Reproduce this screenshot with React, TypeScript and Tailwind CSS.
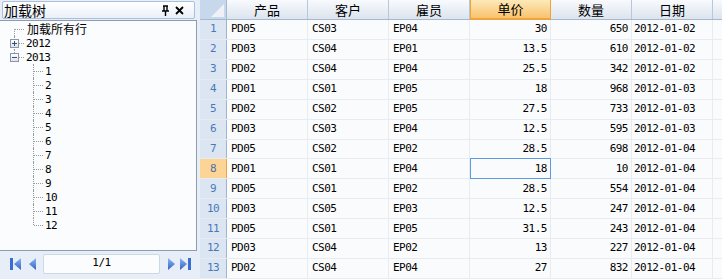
import React from 'react';

const rows = [
  ['PD05', 'CS03', 'EP04', '30', '650', '2012-01-02'],
  ['PD03', 'CS04', 'EP01', '13.5', '610', '2012-01-02'],
  ['PD02', 'CS04', 'EP04', '25.5', '342', '2012-01-02'],
  ['PD01', 'CS01', 'EP05', '18', '968', '2012-01-03'],
  ['PD02', 'CS02', 'EP05', '27.5', '733', '2012-01-03'],
  ['PD03', 'CS03', 'EP04', '12.5', '595', '2012-01-03'],
  ['PD05', 'CS02', 'EP02', '28.5', '698', '2012-01-04'],
  ['PD01', 'CS01', 'EP04', '18', '10', '2012-01-04'],
  ['PD05', 'CS01', 'EP02', '28.5', '554', '2012-01-04'],
  ['PD03', 'CS05', 'EP03', '12.5', '247', '2012-01-04'],
  ['PD05', 'CS01', 'EP05', '31.5', '243', '2012-01-04'],
  ['PD03', 'CS04', 'EP02', '13', '227', '2012-01-04'],
  ['PD02', 'CS04', 'EP04', '27', '832', '2012-01-04'],
];

const cols = ['产品', '客户', '雇员', '单价', '数量', '日期'];

const mono = { fontFamily: '"DejaVu Sans Mono", "Noto Sans CJK SC", monospace' };
const cjk = { fontFamily: '"Noto Sans CJK SC", "Liberation Sans", sans-serif' };

const Dot = ({ className }: { className: string }) => (
  <span className={'absolute border-[#9a9a9a] border-dotted ' + className} />
);

const ExpandBox = ({ open }: { open: boolean }) => (
  <span className="absolute left-[10px] top-[3px] w-[9px] h-[9px] border border-[#8c96a4] bg-gradient-to-b from-white to-[#dfe3e8] flex items-center justify-center">
    <span className="absolute w-[5px] h-px bg-[#2d4f8a]" />
    {!open && <span className="absolute w-px h-[5px] bg-[#2d4f8a]" />}
  </span>
);

const Tree = () => {
  const kids = Array.from({ length: 12 }, (_, i) => String(i + 1));
  return (
    <div className="flex flex-col pt-px text-black">
      <div className="relative h-[14px] flex items-center">
        <Dot className="left-[14px] top-[7px] h-[7px] border-l" />
        <Dot className="left-[15px] top-[7px] w-[9px] border-t" />
        <span className="ml-[27px] text-[12px] leading-none" style={cjk}>加载所有行</span>
      </div>
      <div className="relative h-[14px] flex items-center">
        <Dot className="left-[14px] top-0 h-[14px] border-l" />
        <ExpandBox open={false} />
        <Dot className="left-[19px] top-[7px] w-[5px] border-t" />
        <span className="ml-[26px] text-[11px] tracking-[-0.5px] leading-none" style={mono}>2012</span>
      </div>
      <div className="relative h-[14px] flex items-center">
        <Dot className="left-[14px] top-0 h-[7px] border-l" />
        <ExpandBox open={true} />
        <Dot className="left-[19px] top-[7px] w-[5px] border-t" />
        <span className="ml-[26px] text-[11px] tracking-[-0.5px] leading-none" style={mono}>2013</span>
      </div>
      {kids.map((k, i) => (
        <div key={k} className="relative h-[14px] flex items-center">
          <Dot className={'left-[33px] top-0 border-l ' + (i === kids.length - 1 ? 'h-[7px]' : 'h-[14px]')} />
          <Dot className="left-[34px] top-[7px] w-[9px] border-t" />
          <span className="ml-[45px] text-[11px] tracking-[-0.5px] leading-none" style={mono}>{k}</span>
        </div>
      ))}
    </div>
  );
};

const Tri = ({ dir }: { dir: 'l' | 'r' }) => (
  <svg width="7" height="12" viewBox="0 0 7 12">
    <defs>
      <linearGradient id={'g' + dir} x1="0" y1="0" x2="0" y2="1">
        <stop offset="0" stopColor="#8fb6f0" />
        <stop offset="1" stopColor="#2f64c8" />
      </linearGradient>
    </defs>
    <polygon points={dir === 'l' ? '7,0 0,6 7,12' : '0,0 7,6 0,12'} fill={'url(#g' + dir + ')'} />
  </svg>
);

const Bar = () => (
  <svg width="3" height="12" viewBox="0 0 3 12">
    <rect x="0" y="0" width="3" height="12" fill="#3a6fd0" />
  </svg>
);

const Pager = () => (
  <div className="h-[29px] flex items-center -mt-[2px]">
    <div className="ml-[10px] flex items-center gap-px">
      <Bar />
      <Tri dir="l" />
    </div>
    <div className="ml-[8px]">
      <Tri dir="l" />
    </div>
    <div className="ml-[7px] w-[117px] h-[20px] bg-[#fbfcfd] border border-[#cdd8e6] rounded-[2px] flex items-center justify-center text-[11px] tracking-[-0.5px]" style={mono}>
      1/1
    </div>
    <div className="ml-[8px]">
      <Tri dir="r" />
    </div>
    <div className="ml-[5px] flex items-center gap-px">
      <Tri dir="r" />
      <Bar />
    </div>
  </div>
);

const LeftPanel = () => (
  <div className="w-[197px] h-[279px] flex flex-col bg-[#e7eef8]">
    <div className="mx-[2px] mt-px h-[18px] border border-[#a9bfdd] rounded-[2px] bg-gradient-to-b from-white to-[#eaf0f9] flex items-center justify-between">
      <span className="ml-px text-[14px] leading-none text-black" style={cjk}>加载树</span>
      <div className="flex items-center gap-[5px] mr-[10px]">
        <svg width="9" height="11" viewBox="0 0 9 11">
          <path d="M2 1h5M3 1v5M6 1v5M1 6h7M4.5 6v5" stroke="#000" strokeWidth="1.4" fill="none" />
        </svg>
        <svg width="9" height="9" viewBox="0 0 9 9">
          <path d="M1 1l7 7M8 1l-7 7" stroke="#000" strokeWidth="1.8" />
        </svg>
      </div>
    </div>
    <div className="mt-px h-[231px] shrink-0 border border-[#8e9cb0] border-l-0 bg-[#fafcfd]">
      <Tree />
    </div>
    <Pager />
  </div>
);

const Grid = () => (
  <div className="flex-1 flex flex-col bg-[#fafbfc] overflow-hidden text-black">
    <div className="flex h-[20px] bg-gradient-to-b from-[#f8fafd] to-[#dce4ee] border-b border-[#a5b8cf]">
      <div className="relative w-[27px] shrink-0 bg-[#c7d7ec] border-r border-[#a5b8cf]">
        <svg className="absolute right-[2px] bottom-[2px]" width="13" height="13" viewBox="0 0 13 13">
          <polygon points="13,0 13,13 0,13" fill="#eef2f7" />
        </svg>
      </div>
      {cols.map((c, i) => (
        <div
          key={c}
          className={
            'w-[81px] shrink-0 flex items-center justify-center border-r text-[13px] ' +
            (i === 3
              ? 'bg-gradient-to-b from-[#fde9b8] to-[#f8c36c] border-[#f0a23e] border-l border-b-2 -mb-px'
              : 'border-[#b8c8da]')
          }
          style={cjk}
        >
          {c}
        </div>
      ))}
      <div className="flex-1" />
    </div>
    {rows.map((r, ri) => (
      <div key={ri} className="flex h-[20px] border-b border-[#e8ebef] text-[11px] tracking-[-0.5px]">
        <div
          className={
            'w-[27px] shrink-0 flex items-center justify-center border-r ' +
            (ri === 7
              ? 'bg-[#fcd596] border-[#f0a23e] text-[#4a6fa5]'
              : 'bg-[#dce6f3] border-[#9fb4cd] text-[#4a78b6]')
          }
          style={mono}
        >
          {ri + 1}
        </div>
        {r.map((v, ci) => (
          <div
            key={ci}
            className={
              'w-[81px] shrink-0 flex items-center border-r ' +
              (ci === 3 || ci === 4 ? 'justify-end pr-[3px] ' : ci === 5 ? 'pl-[2px] ' : 'pl-[4px] ') +
              (ri === 7 && ci === 3 ? 'border border-[#5b9be0] -mt-px h-[21px]' : 'border-[#e8ebef]')
            }
            style={mono}
          >
            {v}
          </div>
        ))}
        <div className="flex-1" />
      </div>
    ))}
  </div>
);

export default function App() {
  return (
    <div className="w-[722px] h-[279px] flex bg-[#e7eef8] overflow-hidden">
      <LeftPanel />
      <div className="w-[3px] shrink-0 bg-[#e7eef8]" />
      <Grid />
    </div>
  );
}
